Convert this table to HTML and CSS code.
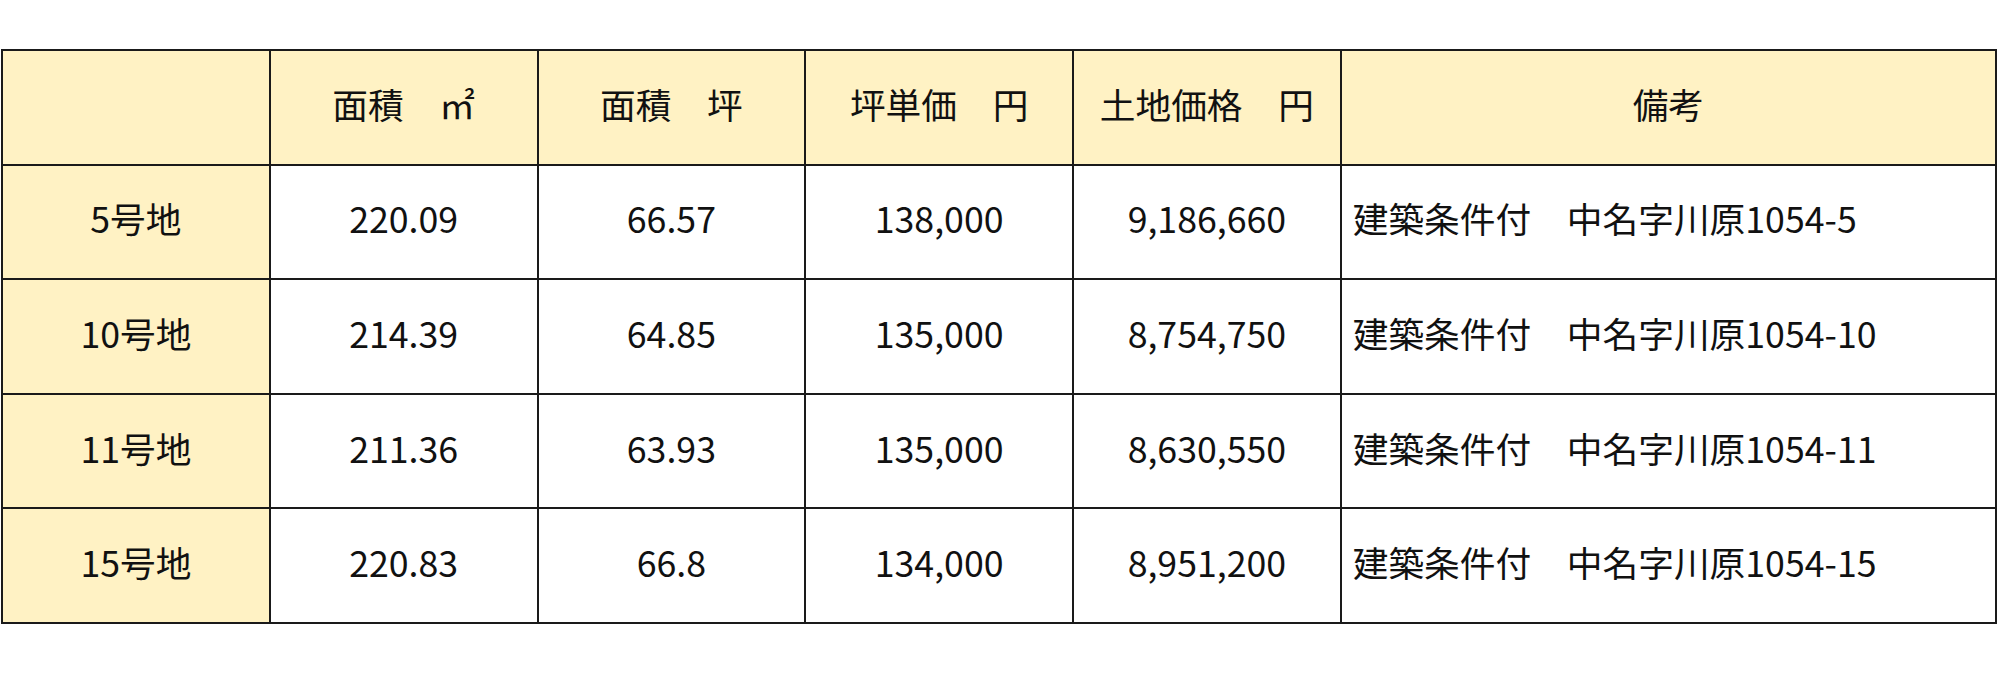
FILE: index.html
```html
<!DOCTYPE html>
<html lang="ja">
<head>
<meta charset="utf-8">
<link rel="stylesheet" href="styles.css">
</head>
<body>
<div class="wrap">
<table class="lots">
<colgroup>
<col class="c"><col class="c"><col class="c"><col class="c"><col class="c"><col class="c-last">
</colgroup>
<thead>
<tr>
<th></th>
<th>面積　㎡</th>
<th>面積　坪</th>
<th>坪単価　円</th>
<th>土地価格　円</th>
<th>備考</th>
</tr>
</thead>
<tbody>
<tr><th>5号地</th><td>220.09</td><td>66.57</td><td>138,000</td><td>9,186,660</td><td class="note">建築条件付　中名字川原1054-5</td></tr>
<tr><th>10号地</th><td>214.39</td><td>64.85</td><td>135,000</td><td>8,754,750</td><td class="note">建築条件付　中名字川原1054-10</td></tr>
<tr><th>11号地</th><td>211.36</td><td>63.93</td><td>135,000</td><td>8,630,550</td><td class="note">建築条件付　中名字川原1054-11</td></tr>
<tr><th>15号地</th><td>220.83</td><td>66.8</td><td>134,000</td><td>8,951,200</td><td class="note">建築条件付　中名字川原1054-15</td></tr>
</tbody>
</table>
</div>
</body>
</html>
```
FILE: styles.css
```css
html, body {
  margin: 0;
  padding: 0;
  background: #fff;
}
.wrap {
  padding: 49px 0 0 1px;
}
.lots {
  border-collapse: collapse;
  table-layout: fixed;
  width: 1996px;
  font-family: "Noto Sans CJK JP", "Noto Sans", sans-serif;
  font-size: 35.7px;
  color: #111;
}
.c { width: 267.75px; }
.lots th, .lots td {
  border: 2px solid #1a1a1a;
  height: 104.6px;
  padding: 0 0 8px 0;
  text-align: center;
  vertical-align: middle;
  font-weight: 400;
  white-space: nowrap;
}
.lots th {
  background: #fff2c4;
}
.lots td {
  background: #fff;
}
.lots td.note {
  text-align: left;
  padding-left: 11px;
}
```
